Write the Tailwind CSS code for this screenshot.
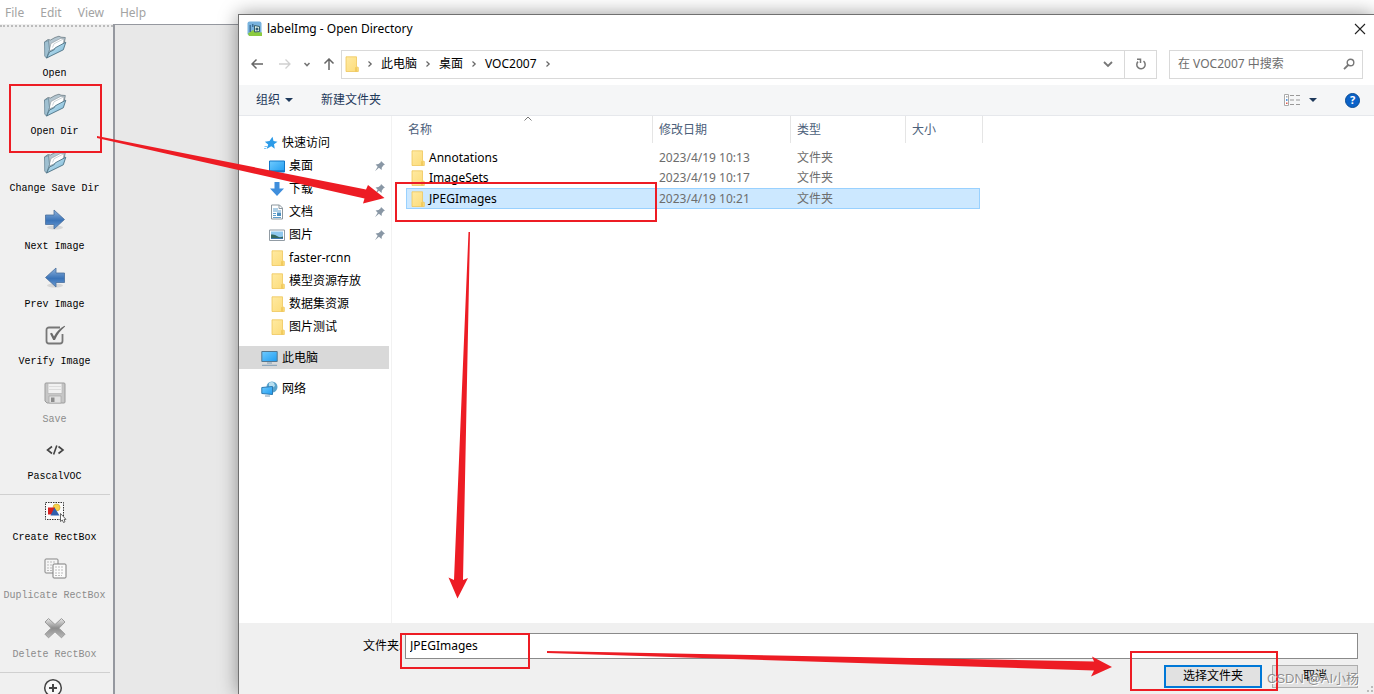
<!DOCTYPE html>
<html lang="zh-CN">
<head>
<meta charset="utf-8">
<meta name="viewport" content="width=device-width, initial-scale=1">
<title>labelImg - Open Directory</title>
<script src="https://cdn.jsdelivr.net/npm/@tailwindcss/browser@4"></script>
</head>
<body class="relative flex h-screen flex-col overflow-hidden bg-white font-['Noto_Sans','Noto_Sans_CJK_SC',sans-serif] text-xs text-black">

<!-- Shared icons -->
<svg class="absolute h-0 w-0" aria-hidden="true">
  <defs>
    <linearGradient id="gFolder" x1="0" y1="0" x2="1" y2="1"><stop offset="0" stop-color="#ffeaa2"/><stop offset="1" stop-color="#fcdb78"/></linearGradient>
    <linearGradient id="gOpen" x1="0" y1="0" x2="1" y2="1"><stop offset="0" stop-color="#d4ecf5"/><stop offset="1" stop-color="#6fb1d4"/></linearGradient>
    <linearGradient id="gBlue" x1="0" y1="0" x2="0" y2="1"><stop offset="0" stop-color="#8fb3dc"/><stop offset=".55" stop-color="#3a73b8"/><stop offset="1" stop-color="#6a9bd2"/></linearGradient>
    <linearGradient id="gScreen" x1="0" y1="0" x2="1" y2="1"><stop offset="0" stop-color="#6fcbff"/><stop offset="1" stop-color="#1f9cf0"/></linearGradient>
    <linearGradient id="gX" x1="0" y1="0" x2="0" y2="1"><stop offset="0" stop-color="#e8e8e8"/><stop offset=".5" stop-color="#8d8d8d"/><stop offset="1" stop-color="#bababa"/></linearGradient>
    <symbol id="folder" viewBox="0 0 14 16">
      <path d="M1 .8h10.500v10l1.800.6v4.100H1z" fill="url(#gFolder)" stroke="#efc75c" stroke-width=".8"/>
      <path d="M11 11.200v4.300" stroke="#e6b93f" stroke-width="1"/>
    </symbol>
    <symbol id="open" viewBox="0 0 24 24">
      <path d="M1.500 7 5 4.500 7.500 5 12 2.500 16 1.200 18 2.200 22.300 2.500 21 9 5 22z" fill="#b4c6d0" stroke="#6b7b84" stroke-width=".8"/>
      <path d="M6 16 8 8.500 18 3.200l3 1-1 6z" fill="#fff" stroke="#8d979d" stroke-width=".6"/>
      <path d="M9.500 12.500 11 8.800l9-4.600" fill="none" stroke="#c2cacf" stroke-width=".8"/>
      <path d="M1.500 7 5.500 5.500 6.500 14.500 3.600 23.200 1.700 21z" fill="#9fc0d1" stroke="#62808f" stroke-width=".7"/>
      <path d="M3.600 23 6.500 17 10.800 15 12.300 12.800 22.800 7.200 20.300 14.800z" fill="url(#gOpen)" stroke="#4c7284" stroke-width=".9"/>
    </symbol>
    <symbol id="arrow" viewBox="0 0 24 24">
      <ellipse cx="12" cy="19.500" rx="8" ry="2" fill="#000" opacity=".1"/>
      <path d="M2.500 7H11V2L21.500 11.500 11 21V16.500H2.500z" fill="url(#gBlue)" stroke="#4a6f9c" stroke-width=".8"/>
    </symbol>
    <symbol id="pin" viewBox="0 0 12 12">
      <path d="m7 1 4 3.700-1.200.4L7.800 7.600 7.600 10 4.900 7.700 1 11.200 3.700 6.700 1.600 4.500 4.500 4.100 6.700 2.200z" fill="#8997a5"/>
    </symbol>
    <symbol id="chev" viewBox="0 0 6 8"><path d="M1.500 1.500 4.200 4 1.500 6.500" fill="none" stroke="#666" stroke-width="1.200"/></symbol>
  </defs>
</svg>

<nav class="flex h-6 shrink-0 items-center gap-4 px-[5px] pt-[2px] text-[#a3a3a3]" aria-label="Menu">
  <button type="button">File</button>
  <button type="button">Edit</button>
  <button type="button">View</button>
  <button type="button">Help</button>
</nav>

<main class="flex min-h-0 flex-1">
  <div class="w-[113px] shrink-0 overflow-hidden bg-[#f0f0f0] font-['Liberation_Mono',monospace] text-[10px]" role="toolbar">
    <div class="mb-1 mt-px border-t-2 border-dotted border-[#bcbcbc]"></div>
    <div class="grid h-[461px] w-[109px] auto-rows-fr">
      <button type="button" class="flex flex-col items-center gap-2 whitespace-nowrap pt-1"><svg class="h-6 w-6"><use href="#open"/></svg>Open</button>
      <button type="button" class="flex flex-col items-center gap-2 whitespace-nowrap pt-1"><svg class="h-6 w-6"><use href="#open"/></svg>Open Dir</button>
      <button type="button" class="flex flex-col items-center gap-2 whitespace-nowrap pt-1"><svg class="h-6 w-6"><use href="#open"/></svg>Change Save Dir</button>
      <button type="button" class="flex flex-col items-center gap-2 whitespace-nowrap pt-1"><svg class="h-6 w-6"><use href="#arrow"/></svg>Next Image</button>
      <button type="button" class="flex flex-col items-center gap-2 whitespace-nowrap pt-1"><svg class="h-6 w-6 -scale-x-100"><use href="#arrow"/></svg>Prev Image</button>
      <button type="button" class="flex flex-col items-center gap-2 whitespace-nowrap pt-1">
        <svg class="h-6 w-6" viewBox="0 0 24 24" fill="none"><path d="M17 4.500H6a2.500 2.500 0 0 0-2.500 2.500v11A2.500 2.500 0 0 0 6 20.500h11a2.500 2.500 0 0 0 2.500-2.500v-7" stroke="#777" stroke-width="1.800"/><path d="M7 10.500 9 9.800l2 3.700C13.500 8.500 17 5 21.500 2.700l.6.900C17.500 7.500 14.500 11.500 12 17h-1.800z" fill="#6a6a6a"/></svg>Verify Image</button>
      <button type="button" disabled class="flex flex-col items-center gap-2 whitespace-nowrap pt-1 text-[#8c8c8c]">
        <svg class="h-6 w-6" viewBox="0 0 24 24"><path d="M3 2h18a1 1 0 0 1 1 1v18a1 1 0 0 1-1 1H4l-2-2V3a1 1 0 0 1 1-1z" fill="#c6c6c6" stroke="#9c9c9c"/><path d="M5 2.500h14v10H5z" fill="#f1f1f1" stroke="#b5b5b5" stroke-width=".7"/><path d="M6 5.500h12M6 8.500h12" stroke="#dcdcdc"/><path d="M6 15h12v7H6z" fill="#e2e2e2" stroke="#a8a8a8" stroke-width=".7"/><path d="M8 16.500h3.500V21H8z" fill="#8c8c8c"/></svg>Save</button>
      <button type="button" class="flex flex-col items-center gap-2 whitespace-nowrap pt-1">
        <svg class="h-6 w-6" viewBox="0 0 24 24" fill="none" stroke="#444" stroke-width="1.600"><path d="M9 8.500 4.500 12 9 15.500M15.500 8.500 20 12l-4.500 3.500M13.800 7.500l-3.200 9"/></svg>PascalVOC</button>
    </div>
    <div class="mr-[3px] mt-[2px] border-t border-[#d0d0d0]"></div>
    <div class="grid h-[175px] w-[109px] auto-rows-fr">
      <button type="button" class="flex flex-col items-center gap-2 whitespace-nowrap pt-1">
        <svg class="h-6 w-6" viewBox="0 0 24 24"><path d="M2.500 3.500h18v17h-18z" fill="#fafafa" stroke="#333" stroke-dasharray="1.500 1"/><circle cx="13.500" cy="8.500" r="3.500" fill="#f6d34c" stroke="#c9a227" stroke-width=".6"/><path d="M5 8.500h7v7H5z" fill="#d91f1f"/><path d="M11.500 8.500 16.500 16.500h-9z" fill="#2f5fae"/><path d="M17.500 14.500v8l1.800-1.500 1.200 2.500 1.500-.7-1-2.400h2z" fill="#fff" stroke="#444" stroke-width=".8"/></svg>Create RectBox</button>
      <button type="button" disabled class="flex flex-col items-center gap-2 whitespace-nowrap pt-1 text-[#8c8c8c]">
        <svg class="h-6 w-6" viewBox="0 0 24 24"><rect x="2" y="2" width="13" height="14" rx="1" fill="#f6f6f6" stroke="#858585"/><path d="M4 5h9M4 8h9M4 11h9M4 13.500h7" stroke="#bbb" stroke-dasharray="2 1"/><rect x="10" y="7" width="13" height="14" rx="1" fill="#fbfbfb" stroke="#7d7d7d"/><path d="M12 10h9M12 13h9M12 16h9M12 18.500h7" stroke="#bbb" stroke-dasharray="2 1"/></svg>Duplicate RectBox</button>
      <button type="button" disabled class="flex flex-col items-center gap-2 whitespace-nowrap pt-1 text-[#8c8c8c]">
        <svg class="h-6 w-6" viewBox="0 0 24 24"><path d="M5.500 2.500 12 8.500l6.500-6 3.500 3.500-6 6.200 6 6-3.500 3.600-6.500-6-6.500 6L2 18.200l6-6L2 6z" fill="url(#gX)" stroke="#9b9b9b" stroke-linejoin="round"/></svg>Delete RectBox</button>
    </div>
    <div class="mr-[3px] mt-[2px] border-t border-[#d0d0d0]"></div>
    <button type="button" aria-label="Zoom In" class="flex w-[106px] justify-center pt-[3px]">
      <svg class="h-6 w-6" viewBox="0 0 24 24" fill="none" stroke="#444"><circle cx="12" cy="12" r="8.300" fill="#f8f8f8" stroke-width="1.500"/><path d="M12 8v8M8 12h8" stroke-width="2"/></svg></button>
  </div>
  <div class="flex-1 border-l-2 border-t border-[#95989f] bg-[#e8e8e8]"></div>
</main>

<div class="absolute right-1 top-0 h-[2px] w-5 rounded-b-full bg-white"></div>

<!-- Directory dialog window -->
<section role="dialog" aria-label="labelImg - Open Directory" class="absolute bottom-0 left-[238px] right-0 top-[14px] flex flex-col border-l border-t border-[#707070] bg-white shadow-[0_0_18px_rgba(0,0,0,0.4)]">
  <header class="flex h-7 shrink-0 items-center gap-1 pl-2 pr-2">
    <svg class="h-4 w-4" viewBox="0 0 16 16"><rect x=".5" y=".5" width="14" height="14" rx="2" fill="#79b3de"/><path d="M1 12.500 6 9l3 2 6 .500V15H2z" fill="#8ccb3f"/><path d="M2.500 4H4v7H2.500zM5 3h1.500v3H5z" fill="#3f7199"/><path d="m7.500 4.500 5 1v5l-5 .5z" fill="#dcefe6" stroke="#355f6d"/><circle cx="10" cy="8" r="1.500" fill="#305d75"/></svg>
    <h1 class="flex-1">labelImg - Open Directory</h1>
    <button type="button" aria-label="Close"><svg class="h-3 w-3" viewBox="0 0 12 12" stroke="#222" stroke-width="1.100"><path d="m1 1 10 10M11 1 1 11"/></svg></button>
  </header>

  <div class="flex h-[42px] shrink-0 items-center pl-3 pr-[11px]">
    <div class="flex w-[90px] shrink-0 items-center">
      <button type="button" aria-label="Back" class="mr-4"><svg class="h-3 w-3" viewBox="0 0 12 12" fill="none" stroke="#666" stroke-width="1.500"><path d="M12 6H1M5.500 1.500 1 6l4.500 4.500"/></svg></button>
      <button type="button" aria-label="Forward" class="mr-3"><svg class="h-3 w-3" viewBox="0 0 12 12" fill="none" stroke="#d0d0d0" stroke-width="1.300"><path d="M0 6h11M6.500 1.500 11 6l-4.500 4.500"/></svg></button>
      <button type="button" aria-label="Recent" class="mr-3"><svg class="h-2 w-2" viewBox="0 0 8 8" fill="none" stroke="#777" stroke-width="1.600"><path d="m1.500 3 2.500 2.500L6.500 3"/></svg></button>
      <button type="button" aria-label="Up"><svg class="h-3 w-3" viewBox="0 0 12 12" fill="none" stroke="#666" stroke-width="1.500"><path d="M6 12V1M1.500 5.500 6 1l4.500 4.500"/></svg></button>
    </div>
    <div class="flex h-[29px] min-w-0 flex-1 items-center border border-[#d9d9d9] pl-[3px]">
      <svg class="mr-2 h-4 w-[14px]"><use href="#folder"/></svg>
      <svg class="mr-2 h-2 w-[6px]"><use href="#chev"/></svg><button type="button">此电脑</button>
      <svg class="mx-2 h-2 w-[6px]"><use href="#chev"/></svg><button type="button">桌面</button>
      <svg class="mx-2 h-2 w-[6px]"><use href="#chev"/></svg><button type="button">VOC2007</button>
      <svg class="mx-2 h-2 w-[6px]"><use href="#chev"/></svg>
      <button type="button" aria-label="History" class="ml-auto mr-[11px]"><svg class="h-[10px] w-[10px]" viewBox="0 0 10 10" fill="none" stroke="#777" stroke-width="1.800"><path d="M1 3l4 4 4-4"/></svg></button>
      <button type="button" aria-label="Refresh" class="flex h-full w-8 items-center justify-center border-l border-[#d9d9d9]"><svg class="h-3 w-3" viewBox="0 0 12 12" fill="none" stroke="#777" stroke-width="1.500"><path d="M8.500 3.200A4.200 4.200 0 1 1 3 3.600"/><path d="M2 1.300H5.500V5"/></svg></button>
    </div>
    <div class="ml-3 flex h-[29px] w-[194px] shrink-0 items-center border border-[#d9d9d9] pl-2 pr-[7px]">
      <input type="search" aria-label="搜索" placeholder="在 VOC2007 中搜索" class="min-w-0 flex-1 outline-none placeholder:text-[#6d6d6d]">
      <svg class="h-3 w-3" viewBox="0 0 12 12" fill="none" stroke="#777" stroke-width="1.400"><circle cx="7.500" cy="4.500" r="3.300"/><path d="M5.200 7 1 11.200" stroke-width="1.800"/></svg>
    </div>
  </div>

  <div class="flex h-[31px] shrink-0 items-center border-b border-[#e6e8ec] bg-[#f5f6f7] pl-[17px] pr-[14px] text-[#1e395b]">
    <button type="button" class="flex items-center gap-[5px]">组织<svg class="h-1 w-2" viewBox="0 0 8 4"><path d="M0 0h8L4 4z" fill="#1e395b"/></svg></button>
    <button type="button" class="ml-7">新建文件夹</button>
    <button type="button" aria-label="View" class="ml-auto mr-7 flex items-center gap-2"><svg class="h-3 w-4" viewBox="0 0 16 12" fill="none"><path d="M.5.500h4v11h-4z" fill="#fff" stroke="#aaa"/><path d="M2 2h1.500v1.500H2z" fill="#aaa"/><path d="M2 5h1.500v2H2z" fill="#5a9ae0"/><path d="M2 8.500h1.500v1.500H2z" fill="#dd5b4f"/><path d="M6 1.500h4M6 6h4M6 10.500h4M12 1.500h4M12 6h4M12 10.500h4" stroke="#999"/></svg><svg class="ml-px h-1 w-2" viewBox="0 0 8 4"><path d="M0 0h8L4 4z" fill="#1e395b"/></svg></button>
    <button type="button" aria-label="Help" class="flex h-[15px] w-[15px] items-center justify-center rounded-full border border-[#084b94] bg-[#0b62c8] text-[11px] font-bold text-white">?</button>
  </div>

  <div class="flex min-h-0 flex-1">
    <aside class="w-[153px] shrink-0 border-r border-[#f2f2f2] pt-[15px]">
      <ul>
        <li class="flex h-[23px] items-center gap-1 pl-[25px]"><svg class="h-[14px] w-[14px]" viewBox="0 0 14 14"><path d="M8.500.8 9.500 5l4 .7-3.500 2.500.8 4.500-3.500-2.500L2.500 13 4.200 8.500.8 5.800 5.500 5z" fill="#2c9be8"/><path d="M.5 10.500h2.500M0 12.500h2" stroke="#7fc4f3"/></svg>快速访问</li>
        <li class="flex h-[23px] items-center gap-1 pl-[30px] pr-[5px]"><svg class="h-4 w-4" viewBox="0 0 16 16"><path d="M.5 3h15v11H.5z" fill="url(#gScreen)" stroke="#1278c8"/><path d="M1 13h14" stroke="#0c5da2"/></svg><span class="flex-1">桌面</span><svg class="h-3 w-3"><use href="#pin"/></svg></li>
        <li class="flex h-[23px] items-center gap-1 pl-[30px] pr-[5px]"><svg class="h-4 w-4" viewBox="0 0 16 16"><path d="M5.500 1h5v6.500H15L8 15 1 7.500h4.500z" fill="#3f8edc"/></svg><span class="flex-1">下载</span><svg class="h-3 w-3"><use href="#pin"/></svg></li>
        <li class="flex h-[23px] items-center gap-1 pl-[30px] pr-[5px]"><svg class="h-4 w-4" viewBox="0 0 16 16"><path d="M2.500 1h8L13.500 4v11h-11z" fill="#fff" stroke="#8c979f"/><path d="M10 1v3.500h3.500" fill="none" stroke="#8c979f"/><path d="M4 5h5M4 7h8M4 9.500h3M4 11.500h3M4 13.500h8" stroke="#5e9ecb"/><path d="M8 8.500h4V12H8z" fill="#4c8fbf"/></svg><span class="flex-1">文档</span><svg class="h-3 w-3"><use href="#pin"/></svg></li>
        <li class="flex h-[23px] items-center gap-1 pl-[30px] pr-[5px]"><svg class="h-4 w-4" viewBox="0 0 16 16"><path d="M.5 3h15v10.500H.5z" fill="#fff" stroke="#929ca4"/><path d="M2 4.500h12V12H2z" fill="#8fc8ee"/><path d="M2 7.500q4-.5 6 1.500t6 .5V12H2z" fill="#35695e"/><path d="M2 11h12v1H2z" fill="#3d78b0"/></svg><span class="flex-1">图片</span><svg class="h-3 w-3"><use href="#pin"/></svg></li>
        <li class="flex h-[23px] items-center gap-1 pl-8"><svg class="h-4 w-[14px]"><use href="#folder"/></svg>faster-rcnn</li>
        <li class="flex h-[23px] items-center gap-1 pl-8"><svg class="h-4 w-[14px]"><use href="#folder"/></svg>模型资源存放</li>
        <li class="flex h-[23px] items-center gap-1 pl-8"><svg class="h-4 w-[14px]"><use href="#folder"/></svg>数据集资源</li>
        <li class="flex h-[23px] items-center gap-1 pl-8"><svg class="h-4 w-[14px]"><use href="#folder"/></svg>图片测试</li>
        <li class="mr-[2px] mt-2 flex h-[23px] items-center gap-1 bg-[#d9d9d9] pl-[22px]"><svg class="h-4 w-[17px]" viewBox="0 0 17 16"><path d="M.8 1.500h15.400v10H.8z" fill="url(#gScreen)" stroke="#55778f"/><path d="M6 13h5M1 15.300h15" stroke="#7c9cb4"/></svg>此电脑</li>
        <li class="mt-2 flex h-[23px] items-center gap-1 pl-[22px]"><svg class="h-4 w-[17px]" viewBox="0 0 17 16"><circle cx="11" cy="6" r="5.500" fill="#5aa3cb"/><path d="M8 2q3-2 5 0l1 3-3 2-3-1z" fill="#b8dff0"/><path d="M.8 6.500 11.500 5.500v8L.8 12.500z" fill="url(#gScreen)" stroke="#2d79b0"/><path d="M4 15h5" stroke="#7c9cb4"/></svg>网络</li>
      </ul>
    </aside>

    <div class="relative min-w-0 flex-1 pl-[14px]">
      <svg class="absolute left-[132px] top-0 h-[5px] w-2" viewBox="0 0 8 5" fill="none" stroke="#777"><path d="m.5 4.500 3.500-3.500 3.500 3.500"/></svg>
      <table class="w-[577px] table-fixed border-separate border-spacing-0 text-left">
        <colgroup><col class="w-[247px]"><col class="w-[138px]"><col class="w-[115px]"><col class="w-[77px]"></colgroup>
        <thead>
          <tr class="h-[27px] text-[#4c607a]">
            <th class="border-r border-[#e5e5e5] p-0 pl-[2px] font-normal">名称</th>
            <th class="border-r border-[#e5e5e5] p-0 pl-[6px] font-normal">修改日期</th>
            <th class="border-r border-[#e5e5e5] p-0 pl-[6px] font-normal">类型</th>
            <th class="border-r border-[#e5e5e5] p-0 pl-[6px] font-normal">大小</th>
          </tr>
          <tr class="h-[5px]" aria-hidden="true"></tr>
        </thead>
        <tbody class="text-[#6d6d6d]">
          <tr class="h-5"><td class="p-0 pl-[5px] text-black"><span class="flex items-center gap-1"><svg class="h-4 w-[14px]"><use href="#folder"/></svg>Annotations</span></td><td class="p-0 pl-[6px]">2023/4/19 10:13</td><td class="p-0 pl-[6px]">文件夹</td><td></td></tr>
          <tr class="h-5"><td class="p-0 pl-[5px] text-black"><span class="flex items-center gap-1"><svg class="h-4 w-[14px]"><use href="#folder"/></svg>ImageSets</span></td><td class="p-0 pl-[6px]">2023/4/19 10:17</td><td class="p-0 pl-[6px]">文件夹</td><td></td></tr>
          <tr class="h-[21px]" aria-selected="true"><td class="border-y border-l border-[#99d1ff] bg-[#cce8ff] p-0 pl-1 text-black"><span class="flex items-center gap-1"><svg class="h-4 w-[14px]"><use href="#folder"/></svg>JPEGImages</span></td><td class="border-y border-[#99d1ff] bg-[#cce8ff] p-0 pl-[6px]">2023/4/19 10:21</td><td class="border-y border-[#99d1ff] bg-[#cce8ff] p-0 pl-[6px]">文件夹</td><td class="p-0 pr-[3px]"><div class="h-[21px] border-y border-r border-[#99d1ff] bg-[#cce8ff]"></div></td></tr>
        </tbody>
      </table>
    </div>
  </div>

  <footer class="flex h-[71px] shrink-0 flex-col gap-[6px] bg-[#f0f0f0] pr-4 pt-[10px]">
    <div class="flex items-center">
      <label for="folderName" class="w-[166px] whitespace-nowrap pl-[124px]">文件夹:</label>
      <input id="folderName" type="text" value="JPEGImages" class="h-[26px] min-w-0 flex-1 border border-[#8a8a8a] bg-white pb-[2px] pl-1 outline-none">
    </div>
    <div class="flex justify-end gap-[10px]">
      <button type="button" class="h-[23px] w-[98px] border-2 border-[#0078d7] bg-[#e1e1e1] pb-px">选择文件夹</button>
      <button type="button" class="h-[23px] w-[86px] border border-[#adadad] bg-[#e1e1e1] pb-px">取消</button>
    </div>
  </footer>
  <svg class="absolute bottom-0 right-0 h-2 w-2" viewBox="0 0 8 8" fill="#bbb"><path d="M5 0h2v2H5zM5 4h2v2H5zM1 4h2v2H1z"/></svg>
</section>

<!-- Annotations drawn over the windows -->
<div class="pointer-events-none absolute left-[9px] top-[84px] h-[69px] w-[93px] border-2 border-[#ed1c24]"></div>
<div class="pointer-events-none absolute left-[395px] top-[182px] h-10 w-[262px] border-2 border-[#ed1c24]"></div>
<div class="pointer-events-none absolute left-[400px] top-[633px] h-9 w-[130px] border-2 border-[#ed1c24]"></div>
<div class="pointer-events-none absolute left-[1130px] top-[651px] h-10 w-[148px] border-2 border-[#ed1c24]"></div>
<svg class="pointer-events-none absolute left-0 top-0 h-[694px] w-[1374px]" viewBox="0 0 1374 694" fill="#ed1c24">
  <path d="M97 136 366 189.500 368 185 384.500 198 363 203.500 364.500 198.500 97 138z"/>
  <path d="M468.500 232h1.500L463 580l5-2-10.500 20.500L448.500 577.500l5.500 2.500z"/>
  <path d="M547 651 1094 661.500 1092 656.500 1112 667 1091 676.500 1094 670.500 547 653z"/>
</svg>
<p class="pointer-events-none absolute bottom-[5px] right-[15px] whitespace-nowrap font-['Liberation_Sans','Noto_Sans_CJK_SC',sans-serif] text-[13px] leading-5 text-[#777]/80 [text-shadow:1px_1px_0_#fff]">CSDN @AI小杨</p>
</body>
</html>
